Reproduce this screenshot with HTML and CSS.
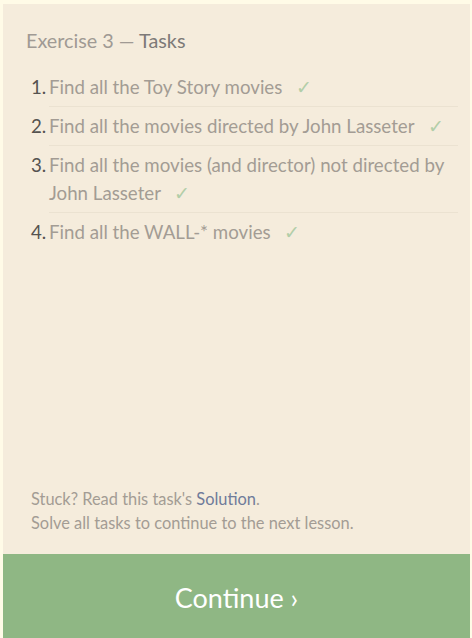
FILE: index.html
```html
<!DOCTYPE html>
<html>
<head>
<meta charset="utf-8">
<link rel="stylesheet" href="styles.css">
</head>
<body>
<div class="panel">
  <div class="content">
    <h2 class="title">Exercise 3 — <span class="strong">Tasks</span></h2>
    <ol class="tasks">
      <li><span class="num">1.</span><span class="txt">Find all the Toy Story movies <span class="check">✓</span></span></li>
      <li><span class="num">2.</span><span class="txt">Find all the movies directed by John Lasseter <span class="check">✓</span></span></li>
      <li><span class="num">3.</span><span class="txt">Find all the movies (and director) not directed by John Lasseter <span class="check">✓</span></span></li>
      <li><span class="num">4.</span><span class="txt">Find all the WALL-* movies <span class="check">✓</span></span></li>
    </ol>
  </div>
  <div class="footer">
    <p>Stuck? Read this task's <a class="link">Solution</a>.</p>
    <p>Solve all tasks to continue to the next lesson.</p>
  </div>
  <div class="continue">Continue ›</div>
</div>
</body>
</html>
```
FILE: styles.css
```css
html, body {
  margin: 0;
  padding: 0;
  height: 100%;
}
body {
  background: #fffbe7;
  font-family: Lato, "Open Sans", sans-serif;
  overflow: hidden;
}
.panel {
  margin: 4px 2px 0 3px;
  height: 634px;
  background: #f5ecdc;
  display: flex;
  flex-direction: column;
}
.content {
  flex: 1;
  padding: 24px 12px 0 23px;
}
.title {
  margin: 0 0 21px 0;
  font-size: 19.8px;
  font-weight: normal;
  color: #a09a94;
  line-height: 24px;
}
.title .strong {
  color: #7d7a78;
}
.tasks {
  list-style: none;
  margin: 0;
  padding: 0;
}
.tasks li {
  display: flex;
  font-size: 18.7px;
  line-height: 28px;
}
.num {
  width: 18px;
  padding-left: 5px;
  color: #555350;
  flex-shrink: 0;
}
.txt {
  flex: 1;
  color: #a39c94;
  padding: 5px 0 5px;
  border-bottom: 1px solid #ebe2d1;
}
.tasks li:first-child .txt { padding-top: 0; }
.tasks li:last-child .txt { border-bottom: none; }
.tasks li .num { padding-top: 5px; }
.tasks li:first-child .num { padding-top: 0; }
.check {
  color: #b2cea8;
  margin-left: 9px;
}
.footer {
  padding: 0 0 19px 28px;
  font-size: 16.4px;
  line-height: 24px;
  color: #a39c94;
}
.footer p { margin: 0; }
.link { color: #6f7b9a; }
.continue {
  height: 84px;
  background: #8fb784;
  color: #ffffff;
  font-size: 27px;
  display: flex;
  align-items: center;
  justify-content: center;
  padding-top: 2px;
  box-sizing: border-box;
}
```
